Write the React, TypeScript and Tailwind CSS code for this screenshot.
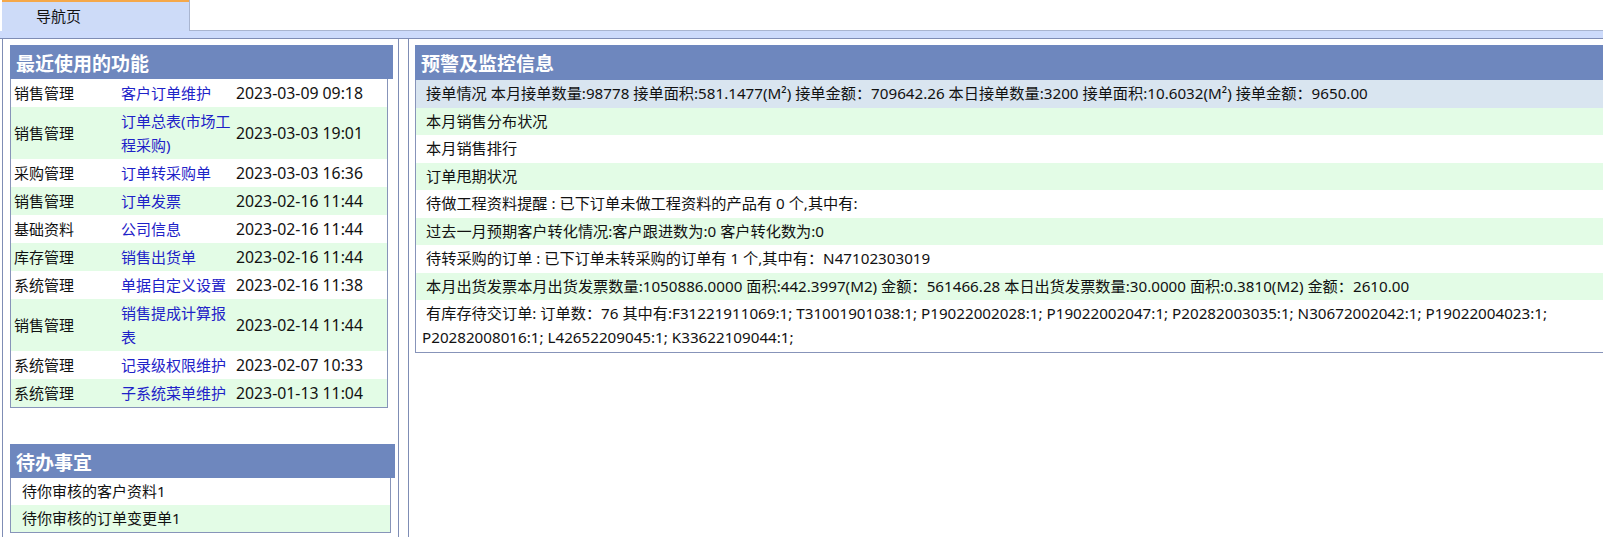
import React from 'react';

const recent: [string, string, string][] = [
    ['销售管理', '客户订单维护', '2023-03-09 09:18'],
    ['销售管理', '订单总表(市场工程采购)', '2023-03-03 19:01'],
    ['采购管理', '订单转采购单', '2023-03-03 16:36'],
    ['销售管理', '订单发票', '2023-02-16 11:44'],
    ['基础资料', '公司信息', '2023-02-16 11:44'],
    ['库存管理', '销售出货单', '2023-02-16 11:44'],
    ['系统管理', '单据自定义设置', '2023-02-16 11:38'],
    ['销售管理', '销售提成计算报表', '2023-02-14 11:44'],
    ['系统管理', '记录级权限维护', '2023-02-07 10:33'],
    ['系统管理', '子系统菜单维护', '2023-01-13 11:04'],
];

const todos = ['待你审核的客户资料1', '待你审核的订单变更单1'];

const alerts = [
    '本月销售分布状况',
    '本月销售排行',
    '订单甩期状况',
    '待做工程资料提醒 : 已下订单未做工程资料的产品有 0 个,其中有:',
    '过去一月预期客户转化情况:客户跟进数为:0 客户转化数为:0',
    '待转采购的订单 : 已下订单未转采购的订单有 1 个,其中有：N47102303019',
    '本月出货发票本月出货发票数量:1050886.0000 面积:442.3997(M2) 金额：561466.28 本日出货发票数量:30.0000 面积:0.3810(M2) 金额：2610.00',
];

function PanelHeader({ title, tall }: { title: string; tall?: boolean }) {
    return (
        <div
            className={`${
                tall ? 'h-[35px]' : 'h-[34px]'
            } bg-[#6e87be] pl-[6px] pt-[5px] text-[19px] font-bold leading-[29px] text-white`}
        >
            {title}
        </div>
    );
}

export default function App() {
    return (
        <div className="h-[537px] w-[1603px] overflow-hidden bg-white font-['Noto_Sans','Noto_Sans_CJK_SC',sans-serif] text-[15px] text-[#111]">
            {/* Tab strip */}
            <div className="flex h-[31px]">
                <div className="ml-[2px] w-[187px] border-t-2 border-[#f5a84a] bg-[#cddbf8] pl-[34px] text-[15px] leading-[28px]">
                    导航页
                </div>
                <div className="flex-1 border-b border-l border-[#a9b5d0]" />
            </div>
            <div className="h-[8px] border-b border-[#7f8db5] bg-[#cddbfb]" />

            <div className="flex h-[498px] pl-[2px]">
                {/* Left pane */}
                <div className="w-[397px] border-x border-[#7f8db5] pl-[7px] pt-[6px]">
                    <div className="w-[383px]">
                        <PanelHeader title="最近使用的功能" />
                    </div>
                    <div className="w-[378px] border-x border-b border-[#8794b9]">
                        {recent.map(([mod, fn, time], i) => (
                            <div
                                key={i}
                                className={`grid grid-cols-[107px_115px_1fr] items-center py-[2px] leading-[24px] ${
                                    i % 2 === 1 ? 'bg-[#e3fce6]' : 'bg-white'
                                }`}
                            >
                                <span className="pl-[3px]">{mod}</span>
                                <span className="pl-[3px] text-[#1e22c8]">{fn}</span>
                                <span className="pl-[3px] text-[15.8px]">{time}</span>
                            </div>
                        ))}
                    </div>

                    {/* Todo */}
                    <div className="mt-[36px] w-[385px]">
                        <PanelHeader title="待办事宜" />
                    </div>
                    <div className="w-[381px] border-x border-b border-[#8794b9]">
                        {todos.map((t, i) => (
                            <div
                                key={t}
                                className={`py-[1px] pl-[11px] leading-[25px] ${
                                    i % 2 === 1 ? 'bg-[#e3fce6]' : 'bg-white'
                                }`}
                            >
                                {t}
                            </div>
                        ))}
                    </div>
                </div>

                {/* Right pane */}
                <div className="ml-[9px] flex-1 overflow-hidden border-l border-[#7f8db5] pl-[6px] pt-[6px] text-[15.2px]">
                    <div className="w-[1200px]">
                        <PanelHeader title="预警及监控信息" tall />
                        <div className="border-b border-l border-[#8794b9]">
                            <div className="bg-[#d9e5f0] py-[1px] pl-[6px] indent-[4px] leading-[25.5px]">
                                接单情况 本月接单数量:98778 接单面积:581.1477(M²) 接单金额：709642.26 本日接单数量:3200
                                接单面积:10.6032(M²) 接单金额：9650.00
                            </div>
                            {alerts.map((a, i) => (
                                <div
                                    key={i}
                                    className={`py-[1px] pl-[6px] indent-[4px] leading-[25.5px] ${
                                        i % 2 === 0 ? 'bg-[#e3fce6]' : 'bg-white'
                                    }`}
                                >
                                    {a}
                                </div>
                            ))}
                            <div className="whitespace-nowrap bg-white pb-[3px] pl-[6px] pt-[1px] leading-[24px]">
                                <div className="pl-[4px]">
                                    有库存待交订单: 订单数：76 其中有:F31221911069:1; T31001901038:1; P19022002028:1;
                                    P19022002047:1; P20282003035:1; N30672002042:1; P19022004023:1;
                                </div>
                                <div>P20282008016:1; L42652209045:1; K33622109044:1;</div>
                            </div>
                        </div>
                    </div>
                </div>
            </div>
        </div>
    );
}
